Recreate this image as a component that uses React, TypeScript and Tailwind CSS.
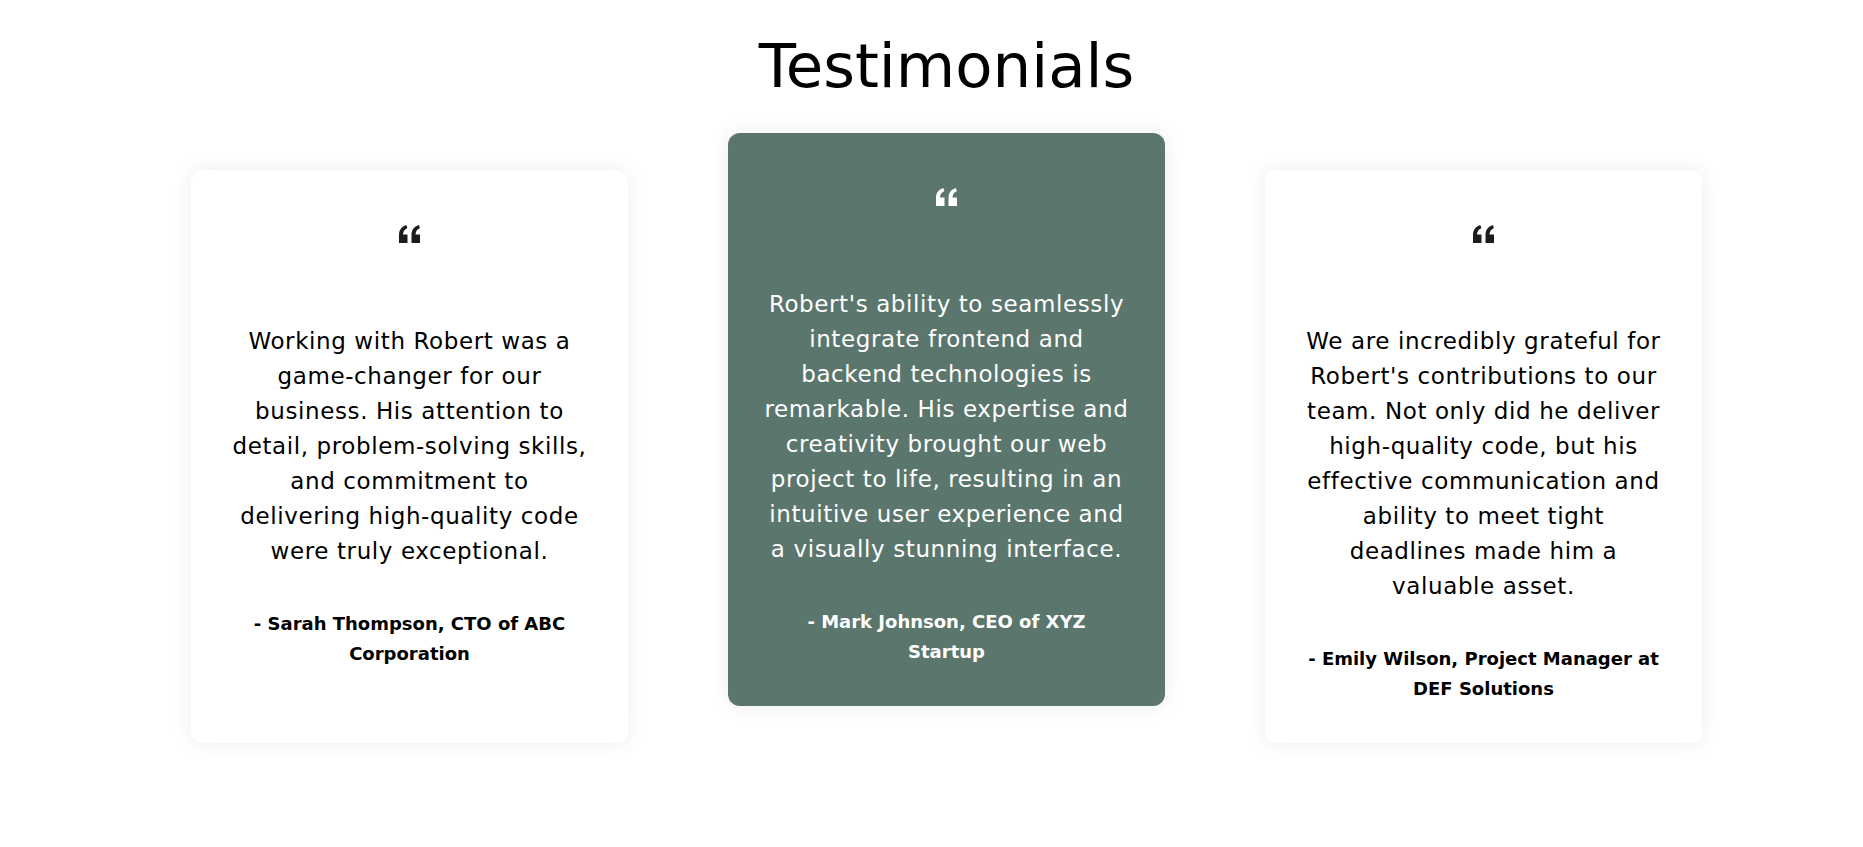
import React from "react";

type Testimonial = {
  lines: string[];
  author: string;
  featured?: boolean;
};

const testimonials: Testimonial[] = [
  {
    lines: [
      "Working with Robert was a",
      "game-changer for our",
      "business. His attention to",
      "detail, problem-solving skills,",
      "and commitment to",
      "delivering high-quality code",
      "were truly exceptional.",
    ],
    author: "- Sarah Thompson, CTO of ABC Corporation",
  },
  {
    lines: [
      "Robert's ability to seamlessly",
      "integrate frontend and",
      "backend technologies is",
      "remarkable. His expertise and",
      "creativity brought our web",
      "project to life, resulting in an",
      "intuitive user experience and",
      "a visually stunning interface.",
    ],
    author: "- Mark Johnson, CEO of XYZ Startup",
    featured: true,
  },
  {
    lines: [
      "We are incredibly grateful for",
      "Robert's contributions to our",
      "team. Not only did he deliver",
      "high-quality code, but his",
      "effective communication and",
      "ability to meet tight",
      "deadlines made him a",
      "valuable asset.",
    ],
    author: "- Emily Wilson, Project Manager at DEF Solutions",
  },
];

function QuoteMark({ className }: { className?: string }) {
  return (
    <svg width="24" height="18" viewBox="0 0 24 18" className={className} fill="currentColor">
      <path d="M1 18 H9.5 V9.6 H5 C5.1 6.6 6.6 4.4 9.4 3.1 L8.3 0 C3.6 1.5 1 5 1 10.2 Z" />
      <path d="M13.5 18 H22 V9.6 H17.5 C17.6 6.6 19.1 4.4 21.9 3.1 L20.8 0 C16.1 1.5 13.5 5 13.5 10.2 Z" />
    </svg>
  );
}

function TestimonialCard({ t }: { t: Testimonial }) {
  return (
    <div
      className={
        t.featured
          ? "flex flex-col items-center rounded-xl bg-[#5b766d] px-[30px] pt-[55px] pb-[39px] text-white shadow-[0_0_20px_rgba(0,0,0,0.08)] -translate-y-[37px]"
          : "flex flex-col items-center rounded-xl bg-white px-[30px] pt-[55px] pb-[39px] text-black shadow-[0_0_20px_rgba(0,0,0,0.08)]"
      }
    >
      <QuoteMark className={t.featured ? "text-white" : "text-[#1c1c1c]"} />

      <p className="mt-[81px] whitespace-nowrap text-center text-[23px] leading-[35px] tracking-[0.6px]">
        {t.lines.map((line, i) => (
          <React.Fragment key={i}>
            {line}
            {i < t.lines.length - 1 && <br />}
          </React.Fragment>
        ))}
      </p>

      <p className="mt-[40px] px-[10px] text-center text-[18px] font-bold leading-[30px]">
        {t.author}
      </p>
    </div>
  );
}

export default function App() {
  return (
    <div className="min-h-screen bg-white pl-[30px] font-['DejaVu_Sans',sans-serif] text-black">
      <h2 className="pt-[30px] text-center text-[61px] font-normal leading-[72px]">Testimonials</h2>

      <div className="mt-[68px] grid grid-cols-[437px_437px_437px] justify-center gap-[100px]">
        {testimonials.map((t, i) => (
          <TestimonialCard key={i} t={t} />
        ))}
      </div>
    </div>
  );
}
